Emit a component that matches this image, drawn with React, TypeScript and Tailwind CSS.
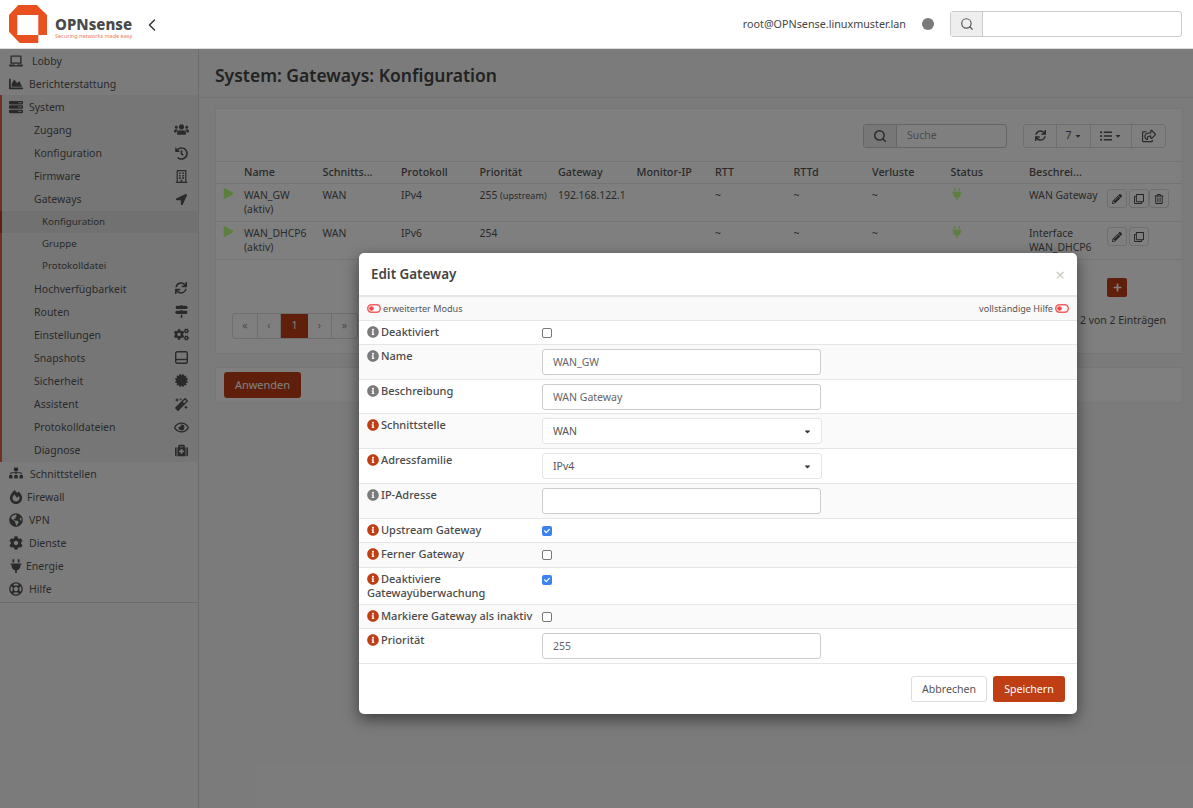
import React from 'react';
import { ChevronLeft, Search } from 'lucide-react';
import {
  FaLaptop, FaChartArea, FaServer, FaUsers, FaHistory, FaRegBuilding, FaLocationArrow, FaSync,
  FaMapSigns, FaCogs, FaCertificate, FaMagic, FaRegEye, FaMedkit, FaSitemap, FaFireAlt,
  FaGlobeAmericas, FaCog, FaPlug, FaRegLifeRing, FaListUl, FaRegShareSquare, FaPencilAlt,
  FaRegClone, FaRegTrashAlt, FaInfoCircle, FaPlus, FaPlay, FaCaretDown, FaCheck,
} from 'react-icons/fa';

const font = "font-['Noto_Sans',sans-serif]";

const SnapshotIcon = ({ size = 13 }: { size?: number }) => (
  <svg width={size} height={size} viewBox="0 0 13 13" fill="none" stroke="currentColor" strokeWidth="1.4">
    <rect x="0.7" y="0.7" width="11.6" height="11.6" rx="1.5" />
    <path d="M0.7 8.5H12.3" />
  </svg>
);

const subItems = [
  { label: 'Zugang', icon: FaUsers, size: 15 },
  { label: 'Konfiguration', icon: FaHistory, size: 13 },
  { label: 'Firmware', icon: FaRegBuilding, size: 13 },
  { label: 'Gateways', icon: FaLocationArrow, size: 11 },
];

const subItemsAfter = [
  { label: 'Hochverfügbarkeit', icon: FaSync, size: 12 },
  { label: 'Routen', icon: FaMapSigns, size: 13 },
  { label: 'Einstellungen', icon: FaCogs, size: 15 },
  { label: 'Snapshots', icon: SnapshotIcon, size: 13 },
  { label: 'Sicherheit', icon: FaCertificate, size: 13 },
  { label: 'Assistent', icon: FaMagic, size: 13 },
  { label: 'Protokolldateien', icon: FaRegEye, size: 15 },
  { label: 'Diagnose', icon: FaMedkit, size: 13 },
];

const TopItem = ({ icon: Icon, label, gap }: { icon: any; label: string; gap: string }) => (
  <div className={`flex h-[23.14px] items-center pl-[9px] text-[10.5px] text-[#555] ${gap}`}>
    <Icon size={14} className="shrink-0" />
    <span className="pt-[2px]">{label}</span>
  </div>
);

const SubItem = ({ icon: Icon, label, size }: { icon: any; label: string; size: number }) => (
  <div className="flex h-[23.14px] items-center justify-between pl-[34px] pr-[9px] text-[10.5px] text-[#555]">
    <span className="pt-[2px]">{label}</span>
    <span className="flex w-[16px] justify-center"><Icon size={size} /></span>
  </div>
);

const Sidebar = () => (
  <aside className="w-[199px] shrink-0 border-r border-[#d8d8d8] bg-[#f7f7f7]">
    <TopItem icon={FaLaptop} label="Lobby" gap="gap-[9px]" />
    <TopItem icon={FaChartArea} label="Berichterstattung" gap="gap-[6px]" />
    <div className="border-l-2 border-[#e0653f] bg-[#ededed]">
      <div className="-ml-[2px]">
        <TopItem icon={FaServer} label="System" gap="gap-[6px]" />
        {subItems.map((i) => <SubItem key={i.label} {...i} />)}
        <div className="flex h-[22px] items-center border-l-2 border-[#c03e14] bg-[#e2e2e2] pl-[40px] pt-[1px] text-[9.75px] text-[#555]">Konfiguration</div>
        <div className="flex h-[22px] items-center pl-[42px] pt-[1px] text-[9.75px] text-[#555]">Gruppe</div>
        <div className="flex h-[22px] items-center pl-[42px] pt-[1px] text-[9.75px] text-[#555]">Protokolldatei</div>
        {subItemsAfter.map((i) => <SubItem key={i.label} {...i} />)}
      </div>
    </div>
    <div className="border-b border-[#d8d8d8] pb-[1px]">
      <TopItem icon={FaSitemap} label="Schnittstellen" gap="gap-[7px]" />
      <TopItem icon={FaFireAlt} label="Firewall" gap="gap-[4px]" />
      <TopItem icon={FaGlobeAmericas} label="VPN" gap="gap-[6px]" />
      <TopItem icon={FaCog} label="Dienste" gap="gap-[6px]" />
      <TopItem icon={FaPlug} label="Energie" gap="gap-[3px]" />
      <TopItem icon={FaRegLifeRing} label="Hilfe" gap="gap-[6px]" />
    </div>
  </aside>
);

const Th = ({ children }: { children?: React.ReactNode }) => (
  <th className="h-[22px] truncate px-[2px] pb-[1px] text-left text-[10.8px] font-medium text-[#555]">{children}</th>
);

const Td = ({ children }: { children?: React.ReactNode }) => (
  <td className="px-[2px] pt-[4px] align-top text-[10.4px] leading-[14px] text-[#555]">{children}</td>
);

const RowButton = ({ children, cls }: { children: React.ReactNode; cls?: string }) => (
  <span className={`flex h-[19px] w-[20px] items-center justify-center rounded-[3px] border border-[#ddd] bg-white text-[#444] ${cls ?? ''}`}>{children}</span>
);

const gatewayRows = [
  { name: 'WAN_GW', proto: 'IPv4', prio: '255', up: true, gw: '192.168.122.1', desc: 'WAN Gateway', del: true },
  { name: 'WAN_DHCP6', proto: 'IPv6', prio: '254', up: false, gw: '', desc: 'Interface WAN_DHCP6', del: false },
];

const Card = () => (
  <section className="mr-[10px] border border-[#eee] bg-white">
    <div className="flex h-[52px] items-center justify-end gap-4 pr-4 pt-[1px]">
      <div className="flex h-[24px] w-[144px] rounded-[3px] border border-[#ccc] text-[10.5px] text-[#999]">
        <span className="flex w-[33px] items-center justify-center border-r border-[#ccc] bg-[#eee] text-[#555]"><Search size={14} strokeWidth={2.5} /></span>
        <span className="flex items-center pl-[10px]">Suche</span>
      </div>
      <div className="flex h-[24px] w-[143px] rounded-[3px] border border-[#ddd] text-[10.5px] text-[#555]">
        <span className="flex w-[33px] items-center justify-center border-r border-[#ddd]"><FaSync size={11} /></span>
        <span className="flex w-[34px] items-center justify-center gap-[2px] border-r border-[#ddd]">7<FaCaretDown size={8} /></span>
        <span className="flex w-[41px] items-center justify-center gap-[2px] border-r border-[#ddd]"><FaListUl size={12} /><FaCaretDown size={8} /></span>
        <span className="flex flex-1 items-center justify-center"><FaRegShareSquare size={14} /></span>
      </div>
    </div>
    <table className="w-full table-fixed border-collapse">
      <colgroup>
        <col className="w-[26px]" />
        {Array.from({ length: 11 }).map((_, i) => <col key={i} className="w-[78.5px]" />)}
        <col />
      </colgroup>
      <thead>
        <tr className="border-y border-[#e8e8e8]">
          <Th /><Th>Name</Th><Th>Schnitts...</Th><Th>Protokoll</Th><Th>Priorität</Th><Th>Gateway</Th><Th>Monitor-IP</Th>
          <Th>RTT</Th><Th>RTTd</Th><Th>Verluste</Th><Th>Status</Th><Th>Beschrei...</Th><Th />
        </tr>
      </thead>
      <tbody>
        {gatewayRows.map((r) => (
          <tr key={r.name} className="h-[38px] border-b border-[#e8e8e8]">
            <td className="pl-[7px] pt-[4px] align-top"><FaPlay size={11} className="text-[#b8ff80]" /></td>
            <Td>{r.name}<br />(aktiv)</Td>
            <Td>WAN</Td>
            <Td>{r.proto}</Td>
            <Td>{r.prio} {r.up && <span className="text-[9.1px]">(upstream)</span>}</Td>
            <Td>{r.gw}</Td>
            <Td />
            <Td>~</Td><Td>~</Td><Td>~</Td>
            <Td><FaPlug size={12} className="text-[#b8ff80]" /></Td>
            <Td>{r.desc}</Td>
            <td className="pt-[5px] align-top">
              <div className="flex pl-[1px]">
                <RowButton cls="mr-[2px]"><FaPencilAlt size={10} /></RowButton>
                <RowButton><FaRegClone size={10} /></RowButton>
                {r.del && <RowButton><FaRegTrashAlt size={10} /></RowButton>}
              </div>
            </td>
          </tr>
        ))}
      </tbody>
    </table>
    <div className="flex h-[53px] items-start justify-end pr-[55px] pt-[18px]">
      <span className="flex h-[19px] w-[20px] items-center justify-center rounded-[2px] bg-[#c03e14] text-white"><FaPlus size={9} /></span>
    </div>
    <div className="flex h-[40px] items-start justify-between pl-4 pr-4 text-[10.5px] text-[#555]">
      <div className="flex h-[26px] overflow-hidden rounded-[3px] border border-[#ddd] text-[#999]">
        <span className="flex w-[25px] items-center justify-center border-r border-[#ddd]">«</span>
        <span className="flex w-[23px] items-center justify-center border-r border-[#ddd]">‹</span>
        <span className="flex w-[27px] items-center justify-center bg-[#c03e14] text-white">1</span>
        <span className="flex w-[24px] items-center justify-center border-r border-[#ddd]">›</span>
        <span className="flex w-[25px] items-center justify-center">»</span>
      </div>
      <span>Zeige 1 bis 2 von 2 Einträgen</span>
    </div>
  </section>
);

const Toggle = () => (
  <svg width="14" height="9" viewBox="0 0 14 9" className="shrink-0">
    <rect x="0.75" y="0.75" width="12.5" height="7.5" rx="3.75" fill="#fff" stroke="#f25d5d" strokeWidth="1.5" />
    <circle cx="4.5" cy="4.5" r="2.3" fill="#f04a4a" />
  </svg>
);

const Info = ({ on }: { on?: boolean }) => (
  <FaInfoCircle size={12} className={`mr-[2px] inline-block align-[-2px] ${on ? 'text-[#c03e14]' : 'text-[#7a7a7a]'}`} />
);

const Box = ({ checked }: { checked?: boolean }) =>
  checked ? (
    <span className="flex h-[10px] w-[10px] items-center justify-center rounded-[2px] bg-[#3b82f0] text-white"><FaCheck size={6} /></span>
  ) : (
    <span className="block h-[10px] w-[10px] rounded-[2px] border border-[#767676] bg-white" />
  );

const Field = ({ value }: { value?: string }) => (
  <div className="flex h-[26px] w-[279px] items-center rounded-[3px] border border-[#ccc] bg-white pl-[10px] pt-[1px] text-[10.5px] text-[#666]">{value}</div>
);

const SelectField = ({ value }: { value: string }) => (
  <div className="flex h-[26px] w-[280px] items-center justify-between rounded-[3px] border border-[#e5e5e5] bg-white pl-[10px] pr-[9px] pt-[1px] text-[10.5px] text-[#555]">
    {value}<FaCaretDown size={9} className="text-[#333]" />
  </div>
);

const formRows = [
  { h: 'h-[24px]', label: 'Deaktiviert', on: false, kind: 'box', pad: 'pt-[7px]' },
  { h: 'h-[35px]', label: 'Name', on: false, kind: 'text', value: 'WAN_GW', pad: 'pt-[4px]' },
  { h: 'h-[34px]', label: 'Beschreibung', on: false, kind: 'text', value: 'WAN Gateway', pad: 'pt-[4px]' },
  { h: 'h-[35px]', label: 'Schnittstelle', on: true, kind: 'select', value: 'WAN', pad: 'pt-[4px]' },
  { h: 'h-[35px]', label: 'Adressfamilie', on: true, kind: 'select', value: 'IPv4', pad: 'pt-[4px]' },
  { h: 'h-[35px]', label: 'IP-Adresse', on: false, kind: 'text', value: '', pad: 'pt-[4px]' },
  { h: 'h-[24px]', label: 'Upstream Gateway', on: true, kind: 'box', checked: true, pad: 'pt-[7px]' },
  { h: 'h-[25px]', label: 'Ferner Gateway', on: true, kind: 'box', pad: 'pt-[7px]' },
  { h: 'h-[37px]', label: 'Deaktiviere Gatewayüberwachung', on: true, kind: 'box', checked: true, pad: 'pt-[7px]' },
  { h: 'h-[24px]', label: 'Markiere Gateway als inaktiv', on: true, kind: 'box', pad: 'pt-[7px]' },
  { h: 'h-[35px]', label: 'Priorität', on: true, kind: 'text', value: '255', pad: 'pt-[4px]' },
];

const Modal = () => (
  <div className={`absolute left-[359px] top-[253px] z-30 h-[461px] w-[718px] overflow-hidden rounded-[5px] bg-white shadow-[0_5px_15px_rgba(0,0,0,0.5)] ${font}`}>
    <div className="flex h-[44px] items-center justify-between border-b-2 border-[#e5e5e5] pl-3 pr-3">
      <span className="text-[13.4px] font-semibold text-[#444]">Edit Gateway</span>
      <span className="text-[17px] leading-none text-[#ccc]">×</span>
    </div>
    <div className="flex h-[24px] items-center justify-between border-b border-[#e5e5e5] bg-[#f9f9f9] pl-2 pr-2 text-[9.1px] text-[#555]">
      <span className="flex items-center gap-[2px]"><Toggle />erweiterter Modus</span>
      <span className="flex items-center gap-[2px]">vollständige Hilfe<Toggle /></span>
    </div>
    {formRows.map((r, i) => (
      <div key={r.label} className={`flex border-b border-[#e5e5e5] ${r.h} ${i % 2 ? 'bg-[#fafafa]' : 'bg-white'}`}>
        <div className="w-[183px] shrink-0 pl-2 pt-[4px] text-[11px] font-medium leading-[14px] text-[#4a4a4a]">
          <Info on={r.on} />{r.label}
        </div>
        <div className={r.pad}>
          {r.kind === 'box' && <Box checked={r.checked} />}
          {r.kind === 'text' && <Field value={r.value} />}
          {r.kind === 'select' && <SelectField value={r.value as string} />}
        </div>
      </div>
    ))}
    <div className="flex justify-end gap-[6px] pr-3 pt-[12px] text-[10.6px]">
      <span className="flex h-[26px] w-[76px] items-center justify-center rounded-[3px] border border-[#ddd] bg-white pt-[1px] text-[#555]">Abbrechen</span>
      <span className="flex h-[26px] w-[72px] items-center justify-center rounded-[3px] bg-[#c03e14] pt-[1px] text-white">Speichern</span>
    </div>
  </div>
);

export default function App() {
  return (
    <div className={`relative flex h-screen flex-col overflow-hidden bg-[#f7f7f7] ${font}`}>
      <header className="relative z-20 flex h-[49px] shrink-0 items-center justify-between border-b border-[#ddd] bg-white pl-[9px] pr-[11px]">
        <div className="flex items-center">
          <svg width="38" height="38" viewBox="0 0 38 38">
            <path d="M9.3 0H27.7L38 10V30H29.3V38.3H11L0 26.7V10ZM8.3 10V30H29.3V10Z" fill="#e8501f" fillRule="evenodd" />
          </svg>
          <div className="ml-2 mt-[8px] flex w-[80px] flex-col gap-[1px]">
            <span className="whitespace-nowrap text-[15px] font-extrabold leading-[16px] text-[#4a4a4a]">OPNsense</span>
            <span className="whitespace-nowrap text-[5.5px] leading-[7px] text-[#ee7a55]">Securing networks made easy</span>
          </div>
          <ChevronLeft size={20} strokeWidth={1.75} className="ml-[7px] mt-[2px] text-[#333]" />
        </div>
        <div className="flex items-center text-[10.75px] text-[#444]">
          <span>root@OPNsense.linuxmuster.lan</span>
          <span className="ml-4 h-[12px] w-[12px] rounded-full bg-[#7a7a7a]" />
          <div className="ml-4 flex h-[26px] w-[232px] rounded-[3px] border border-[#ccc]">
            <span className="flex w-[32px] items-center justify-center border-r border-[#ccc] bg-[#eee] text-[#555]"><Search size={14} strokeWidth={2} /></span>
          </div>
        </div>
      </header>
      <div className="flex min-h-0 flex-1">
        <Sidebar />
        <main className="min-w-0 flex-1">
          <div className="flex h-[49px] items-center border-b border-[#e4e4e4] pl-4 pt-[5px] text-[17.5px] font-semibold text-[#444]">
            System: Gateways: Konfiguration
          </div>
          <div className="pl-4 pt-[10px]">
            <Card />
            <div className="mr-[10px] mt-[13px] flex h-[36px] items-center border border-[#eee] bg-white pl-2">
              <span className="flex h-[26px] w-[77px] items-center justify-center rounded-[3px] bg-[#c03e14] text-[11px] text-white">Anwenden</span>
            </div>
          </div>
        </main>
      </div>
      <div className="absolute inset-0 z-10 bg-black/50" />
      <Modal />
    </div>
  );
}
